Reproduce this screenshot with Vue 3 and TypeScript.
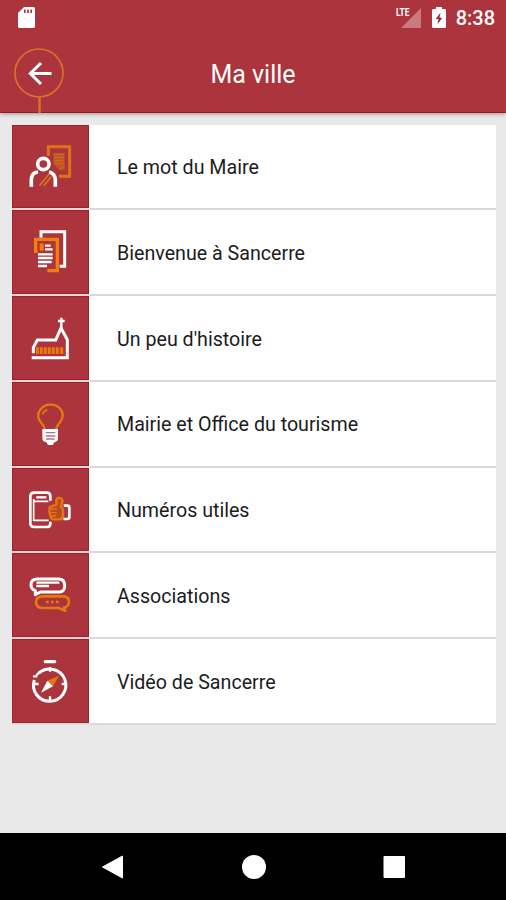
<script setup lang="ts">
type IconName = 'mayor' | 'documents' | 'church' | 'bulb' | 'phone' | 'chat' | 'compass'

interface MenuItem {
  label: string
  icon: IconName
  viewBox: string
}

const items: MenuItem[] = [
  { label: 'Le mot du Maire', icon: 'mayor', viewBox: '66 67 144 144' },
  { label: 'Bienvenue à Sancerre', icon: 'documents', viewBox: '66 69 144 144' },
  { label: "Un peu d'histoire", icon: 'church', viewBox: '66 68 144 144' },
  { label: 'Mairie et Office du tourisme', icon: 'bulb', viewBox: '66 67 144 144' },
  { label: 'Numéros utiles', icon: 'phone', viewBox: '66 67 144 144' },
  { label: 'Associations', icon: 'chat', viewBox: '66 67 144 144' },
  { label: 'Vidéo de Sancerre', icon: 'compass', viewBox: '66 66 144 144' },
]
</script>

<template>
  <div class="screen">
    <header class="header">
      <div class="status">
        <svg class="sd" viewBox="0 0 17 21">
          <path d="M6 0H15.5Q17 0 17 1.5V19.3Q17 21 15.5 21H1.500Q0 21 0 19.300V6Z" fill="#fff" />
          <path d="M6.800 2.500V6M10 2.500V6M13.200 2.500V6" stroke="#ab343d" stroke-width="1.600" />
        </svg>
        <div class="signal">
          <svg class="triangle" viewBox="0 0 20 20"><path d="M20 0V20H0Z" fill="#c97a80" /></svg>
          <span class="lte">LTE</span>
        </div>
        <svg class="battery" viewBox="0 0 14 21">
          <path d="M4 0H10V2H12.500Q14 2 14 3.500V19.500Q14 21 12.500 21H1.500Q0 21 0 19.500V3.500Q0 2 1.500 2H4Z" fill="#fff" />
          <path d="M8.500 5.800 3.700 12H6.500L5.500 17.300 10.300 10.800H7.500Z" fill="#8f2932" />
        </svg>
        <span class="time">8:38</span>
      </div>
      <div class="toolbar">
        <button class="back" aria-label="Retour">
          <svg viewBox="0 0 50 65">
            <circle cx="25" cy="25" r="24" fill="none" stroke="#d5722a" stroke-width="1.700" />
            <path d="M25.500 49V65" stroke="#d5722a" stroke-width="2.500" />
            <path d="M37.500 25.500H16M27 15 16.300 25.500 27 36" fill="none" stroke="#fff" stroke-width="3" />
          </svg>
        </button>
        <h1 class="title">Ma ville</h1>
      </div>
    </header>

    <main class="content">
      <ul class="menu">
        <li v-for="item in items" :key="item.icon" class="row">
          <div class="tile">
            <svg class="icon" :viewBox="item.viewBox" fill="none">
              <g v-if="item.icon === 'mayor'">
                <path d="M130 109V81H194V170H162" stroke="#df7416" stroke-width="9" />
                <path d="M145 99H179V151H163L145 132Z" fill="#c25526" />
                <path d="M147 105H177M147 114H177M147 123H177M151 132H177M164 148 180 139" stroke="#d36a20" stroke-width="3" />
                <circle cx="115" cy="133" r="17" stroke="#fff" stroke-width="11" />
                <path d="M79 201V180Q80 158 99 157M132 157Q150 161 151 180V201" stroke="#fff" stroke-width="11" />
                <path d="M103 198 132 164M116 198 139 171" stroke="#df7416" stroke-width="5" />
              </g>
              <g v-else-if="item.icon === 'documents'">
                <path d="M108 98V80H179V184H164" stroke="#fff" stroke-width="9" />
                <path d="M98 139H92V103H157V197H127" stroke="#f27e0b" stroke-width="10" />
                <path d="M104 115H116V137H104Z" fill="#f27e0b" />
                <path d="M120 122H137M120 133H143M99 148H143M99 159H143M99 171H140M99 183H126" stroke="#fff" stroke-width="7" />
              </g>
              <g v-else-if="item.icon === 'church'">
                <path d="M85 186V169L97 146H152L168 110L187 145V199H80" stroke="#fff" stroke-width="9" />
                <path d="M169 79V112M159 89H179" stroke="#fff" stroke-width="7" />
                <path d="M93 168H178V188H93Z" fill="#b84820" />
                <path d="M97 168V188M109 168V188M121 168V188M133 168V188M145 168V188M157 168V188M170 168V188" stroke="#ee7910" stroke-width="8" />
              </g>
              <g v-else-if="item.icon === 'bulb'">
                <path d="M119 154Q119 147 108 135C86 106 112 81 137 81S187 106 164 135Q154 147 153 154" stroke="#e67812" stroke-width="7" />
                <path d="M112 110Q117 99 127 96" stroke="#e67812" stroke-width="5" />
                <path d="M112 154H159V181Q159 192 148 194L143 202H129L124 194Q112 192 112 181Z" fill="#fff" />
                <path d="M122 165H151M122 175H151M123 184H149" stroke="#b87480" stroke-width="4" />
              </g>
              <g v-else-if="item.icon === 'phone'">
                <path d="M136 111V98Q136 87 125 87H88Q76 87 76 99V178Q76 190 88 190H125Q136 190 136 180V174" stroke="#fff" stroke-width="8" />
                <path d="M86 106V172M86 113H130M86 170H131" stroke="#fff" stroke-width="5" />
                <path d="M94 101H124" stroke="#fff" stroke-width="7" />
                <path d="M176 126H187Q193 126 193 132V160Q193 166 187 166H175" stroke="#fff" stroke-width="8" />
                <path d="M134 130 154 123V109Q156 101 165 103Q174 106 172 115L168 130Q174 134 174 140V157Q173 166 163 167H145Q137 165 136 157L133 145Z" fill="#bb4b26" stroke="#e47810" stroke-width="7" stroke-linejoin="round" />
                <path d="M137 136H155M138 147H155M139 157H154" stroke="#e47810" stroke-width="4" />
              </g>
              <g v-else-if="item.icon === 'chat'">
                <path d="M106 130H165Q179 128 179 111Q179 92 163 91H95Q78 92 78 109Q78 122 91 126V138Z" stroke="#fff" stroke-width="9" stroke-linejoin="round" />
                <path d="M94 102H163M94 112H132" stroke="#fff" stroke-width="7" />
                <path d="M111 143H176Q192 144 192 160Q191 174 177 177L181 186 160 178H111Q94 177 93 161Q93 145 111 143Z" fill="#ab343d" stroke="#e67812" stroke-width="8" stroke-linejoin="round" />
                <path d="M123 160H131M138 160H146M153 160H161" stroke="#e67812" stroke-width="7" />
              </g>
              <g v-else>
                <path d="M121 80H149" stroke="#fff" stroke-width="10" stroke-linecap="round" />
                <path d="M102 114A48.500 48.500 0 1 1 88 135" stroke="#fff" stroke-width="9" />
                <path d="M84 124H97M135 96V110M135 184V197M88 147H101M170 147H184M94 121 104 111" stroke="#fff" stroke-width="7" />
                <path d="M162 122 127 137 144 154Z" fill="#e67812" />
                <path d="M127 137 144 154 108 173Z" fill="#fff" />
              </g>
            </svg>
          </div>
          <span class="label">{{ item.label }}</span>
        </li>
      </ul>
    </main>

    <nav class="navbar">
      <svg class="nav-icon" viewBox="0 0 24 24"><path d="M21.500 1V23L1.500 12Z" fill="#fff" stroke="#fff" stroke-linejoin="round" /></svg>
      <svg class="nav-icon" viewBox="0 0 24 24"><circle cx="12" cy="12" r="12" fill="#fff" /></svg>
      <svg class="nav-icon" viewBox="0 0 24 24"><rect x="1.500" y="1" width="21.500" height="22" rx="1" fill="#fff" /></svg>
    </nav>
  </div>
</template>

<style>
body {
  margin: 0;
}
</style>

<style scoped>
.screen {
  display: flex;
  flex-direction: column;
  width: 506px;
  height: 900px;
  overflow: hidden;
  background: #e9e9e9;
  font-family: Roboto, "Liberation Sans", sans-serif;
}
.header {
  box-sizing: border-box;
  flex: none;
  height: 113px;
  background: #ab343d;
  border-bottom: 1px solid #a01820;
  box-shadow: 0 1px 4px rgba(0, 0, 0, 0.35);
}
.status {
  display: flex;
  align-items: center;
  height: 35px;
  padding: 0 11px 0 18px;
  box-sizing: border-box;
}
.sd {
  width: 17px;
  height: 21px;
}
.signal {
  position: relative;
  width: 26px;
  height: 20px;
  margin-left: auto;
}
.triangle {
  display: block;
  width: 20px;
  height: 20px;
  margin-left: 6px;
}
.lte {
  position: absolute;
  left: 1px;
  top: -1px;
  color: #fff;
  font-size: 11px;
  font-weight: 700;
  line-height: 11px;
  transform: scaleX(0.76);
  transform-origin: left;
}
.battery {
  width: 14px;
  height: 21px;
  margin: 0 10px 0 11px;
}
.time {
  color: #fff;
  font-size: 20px;
  font-weight: 500;
  line-height: 35px;
  padding-top: 2px;
}
.toolbar {
  display: grid;
  grid-template-columns: 64px 1fr 64px;
  height: 77px;
}
.back {
  margin: 13px 0 0 14px;
  padding: 0;
  width: 50px;
  height: 64px;
  border: 0;
  background: none;
}
.back svg {
  display: block;
  width: 50px;
  height: 65px;
}
.title {
  margin: 0;
  color: #fff;
  font-size: 25px;
  font-weight: 400;
  line-height: 80px;
  text-align: center;
}
.content {
  flex: 1;
  padding: 11.6px 10px 0 12px;
}
.menu {
  display: grid;
  grid-template-rows: repeat(7, 1fr);
  height: 600.4px;
  margin: 0;
  padding: 0;
  list-style: none;
}
.row {
  display: flex;
  align-items: stretch;
  background: #fff;
  border-bottom: 2px solid #d9d9d9;
}
.tile {
  display: flex;
  align-items: center;
  justify-content: center;
  box-sizing: border-box;
  width: 77px;
  border: 1px solid #a21f29;
  background: #ab343d;
}
.icon {
  width: 48px;
  height: 48px;
}
.label {
  align-self: center;
  padding: 3px 0 0 28px;
  color: #1c1c1c;
  font-size: 19.65px;
  line-height: 28px;
}
.navbar {
  display: flex;
  flex: none;
  align-items: center;
  justify-content: space-between;
  box-sizing: border-box;
  height: 67px;
  padding: 0 100px 0 101px;
  background: #000;
}
.nav-icon {
  width: 24px;
  height: 24px;
}
</style>
